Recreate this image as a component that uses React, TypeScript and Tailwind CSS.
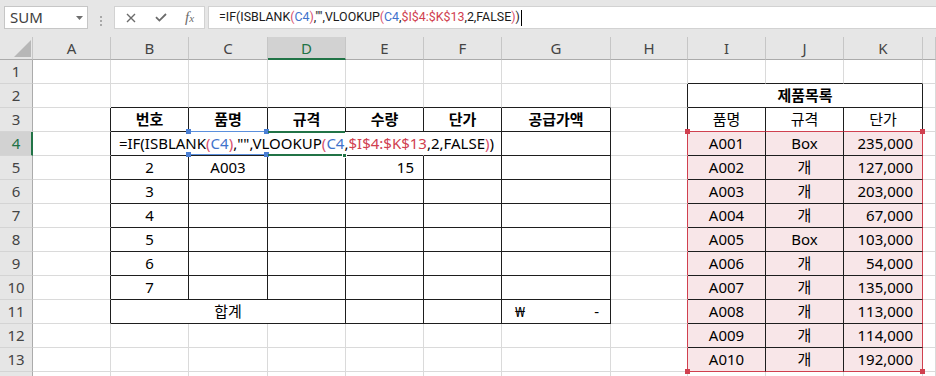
import type { ReactNode } from 'react'

type Line = 'grid' | 'dark' | 'red' | 'none'
type Align = 'center' | 'right' | 'split'

const RIGHT: Record<Line, string> = {
  grid: 'border-r-[#dadada]',
  dark: 'border-r-[#1e1e1e]',
  red: 'border-r-[#d0404f]',
  none: 'border-r-transparent',
}

const BOTTOM: Record<Line, string> = {
  grid: 'border-b-[#dadada]',
  dark: 'border-b-[#1e1e1e]',
  red: 'border-b-[#d0404f]',
  none: 'border-b-transparent',
}

const COLS = ['A', 'B', 'C', 'D', 'E', 'F', 'G', 'H', 'I', 'J', 'K', '']
const ROWS = [1, 2, 3, 4, 5, 6, 7, 8, 9, 10, 11, 12, 13, 14]
const HEAD = ['번호', '품명', '규격', '수량', '단가', '공급가액']

const PRODUCTS = [
  ['A001', 'Box', '235,000'],
  ['A002', '개', '127,000'],
  ['A003', '개', '203,000'],
  ['A004', '개', '67,000'],
  ['A005', 'Box', '103,000'],
  ['A006', '개', '54,000'],
  ['A007', '개', '135,000'],
  ['A008', '개', '113,000'],
  ['A009', '개', '114,000'],
  ['A010', '개', '192,000'],
]

const BLUE = 'text-[#3f73cc]'
const PINK = 'text-[#d8506e]'
const RED = 'text-[#d0404f]'

// formula tokens, coloured the way excel colours references and inner parens
const FORMULA: [string, string][] = [
  ['=IF(ISBLANK', ''],
  ['(', PINK],
  ['C4', BLUE],
  [')', PINK],
  [',"",VLOOKUP', ''],
  ['(', PINK],
  ['C4', BLUE],
  [',', ''],
  ['$I$4:$K$13', RED],
  [',2,FALSE', ''],
  [')', PINK],
  [')', ''],
]

function Formula() {
  return (
    <>
      {FORMULA.map(([t, cls], i) => (
        <span key={i} className={cls}>
          {t}
        </span>
      ))}
    </>
  )
}

// line on the right side of column c (A = 0) in row r
function vline(r: number, c: number): Line {
  if (r >= 3 && r <= 11 && c <= 6) {
    if (r === 4 && c >= 1 && c <= 4) return 'none'
    if (r === 11 && (c === 1 || c === 2)) return 'none'
    return 'dark'
  }
  if (r === 2 && c >= 7 && c <= 10) return c === 8 || c === 9 ? 'none' : 'dark'
  if (r === 3 && c >= 7 && c <= 10) return 'dark'
  if (r >= 4 && r <= 13 && c >= 7 && c <= 10) return c === 7 || c === 10 ? 'red' : 'dark'
  return 'grid'
}

// line under row r in column c
function hline(r: number, c: number): Line {
  if (r >= 2 && r <= 11 && c >= 1 && c <= 6) return 'dark'
  if (c >= 8 && c <= 10) {
    if (r === 3 || r === 13) return 'red'
    if (r >= 1 && r <= 12) return 'dark'
  }
  return 'grid'
}

function content(r: number, c: number): { text?: ReactNode; align?: Align; bold?: boolean } {
  if (r === 2 && c === 8) return { text: '제품목록', bold: true }
  if (r === 3 && c >= 1 && c <= 6) return { text: HEAD[c - 1], bold: true }
  if (r === 3 && c >= 8 && c <= 10) return { text: ['품명', '규격', '단가'][c - 8] }
  if (r >= 4 && r <= 13 && c >= 8 && c <= 10) {
    return { text: PRODUCTS[r - 4][c - 8], align: c === 10 ? 'right' : 'center' }
  }
  if (r >= 5 && r <= 10 && c === 1) return { text: String(r - 3) }
  if (r === 5 && c === 2) return { text: 'A003' }
  if (r === 5 && c === 4) return { text: '15', align: 'right' }
  if (r === 11 && c === 1) return { text: '합계' }
  if (r === 11 && c === 6) {
    return {
      text: (
        <>
          <span>₩</span>
          <span>-</span>
        </>
      ),
      align: 'split',
    }
  }
  return {}
}

function Handle({ className }: { className: string }) {
  return <div className={`absolute z-20 h-[5px] w-[5px] ${className}`} />
}

function overlay(r: number, c: number): ReactNode {
  // C4 reference box (blue)
  if (r === 4 && c === 2) {
    return (
      <>
        <div className="absolute left-[-1px] right-0 top-[-1px] z-20 h-[1px] bg-[#5b8fdc]" />
        <div className="absolute bottom-0 left-[-1px] right-0 z-20 h-[1px] bg-[#5b8fdc]" />
        <Handle className="left-[-3px] top-[-3px] bg-[#4a7fd4]" />
        <Handle className="right-[-2px] top-[-3px] bg-[#4a7fd4]" />
        <Handle className="bottom-[-2px] left-[-3px] bg-[#4a7fd4]" />
        <Handle className="bottom-[-2px] right-[-2px] bg-[#4a7fd4]" />
      </>
    )
  }
  // active cell D4 (green)
  if (r === 4 && c === 3) {
    return (
      <>
        <div className="absolute left-0 right-0 top-[-1px] z-20 h-[2px] bg-[#217346]" />
        <div className="absolute bottom-[-1px] left-0 right-0 z-20 h-[2px] bg-[#217346]" />
        <div className="absolute bottom-[-3px] right-[-2px] z-20 h-[5px] w-[5px] border border-white bg-[#217346]" />
      </>
    )
  }
  // $I$4:$K$13 reference box corners (red)
  if (r === 4 && c === 8) return <Handle className="left-[-3px] top-[-3px] bg-[#d0404f]" />
  if (r === 4 && c === 10) return <Handle className="right-[-3px] top-[-3px] bg-[#d0404f]" />
  if (r === 13 && c === 8) return <Handle className="bottom-[-3px] left-[-3px] bg-[#d0404f]" />
  if (r === 13 && c === 10) return <Handle className="bottom-[-3px] right-[-3px] bg-[#d0404f]" />
  return null
}

function FormulaBar() {
  return (
    <div className="flex h-[37px] shrink-0 bg-[#e6e6e6] pt-[6px]">
      <div className="ml-[4px] flex h-[23px] w-[84px] items-center justify-between border border-[#c6c6c6] bg-white pl-[5px] pr-[4px] text-[15px] text-[#404040]">
        <span>SUM</span>
        <svg width="7" height="4" viewBox="0 0 7 4">
          <path d="M0 0H7L3.5 4Z" fill="#6e6e6e" />
        </svg>
      </div>
      <div className="flex w-[26px] flex-col items-center justify-center gap-[2px] pb-[1px]">
        <div className="h-[2px] w-[2px] bg-[#a8a8a8]" />
        <div className="h-[2px] w-[2px] bg-[#a8a8a8]" />
        <div className="h-[2px] w-[2px] bg-[#a8a8a8]" />
      </div>
      <div className="flex h-[23px] w-[91px] items-center border border-[#d2d2d2] bg-white text-[#6b6b6b]">
        <div className="flex w-[32px] justify-center">
          <svg width="10" height="10" viewBox="0 0 10 10">
            <path d="M1 1L9 9M9 1L1 9" stroke="#6b6b6b" strokeWidth="1.4" />
          </svg>
        </div>
        <div className="flex w-[28px] justify-center">
          <svg width="12" height="9" viewBox="0 0 12 9">
            <path d="M1 4.2L4.4 7.6L11 1" fill="none" stroke="#6b6b6b" strokeWidth="1.8" />
          </svg>
        </div>
        <div className="flex w-[29px] items-baseline justify-center font-['Liberation_Serif',serif] italic">
          <span className="text-[15px]">f</span>
          <span className="text-[11px]">x</span>
        </div>
      </div>
      <div className="ml-[3px] flex h-[23px] flex-1 items-center border-y border-l border-[#d2d2d2] bg-white pl-[10px] font-['Roboto',sans-serif] text-[12.4px] text-[#1a1a1a]">
        <Formula />
        <div className="ml-[1px] h-[16px] w-[1px] bg-black" />
      </div>
    </div>
  )
}

function Sheet() {
  const cells: ReactNode[] = []

  COLS.forEach((col, i) => {
    if (i === 0) {
      cells.push(
        <div
          key="corner"
          className="flex h-[23px] items-end justify-end border-b border-r border-b-[#ababab] border-r-[#c6c6c6] bg-[#e6e6e6] pb-[2px] pr-[1px]"
        >
          <svg width="17" height="17" viewBox="0 0 17 17">
            <path d="M17 0V17H0Z" fill="#b7b7b7" />
          </svg>
        </div>,
      )
    }
    const active = col === 'D'
    cells.push(
      <div
        key={`h-${col || 'L'}`}
        className={
          active
            ? 'flex h-[23px] items-center justify-center border-b-2 border-r border-b-[#217346] border-r-[#c6c6c6] bg-[#d2d2d2] pt-[1px] text-[#217346]'
            : 'flex h-[23px] items-center justify-center border-b border-r border-b-[#ababab] border-r-[#c6c6c6] bg-[#e6e6e6] text-[#444444]'
        }
      >
        {col}
      </div>,
    )
  })

  ROWS.forEach((r) => {
    cells.push(
      <div
        key={`r-${r}`}
        className={
          r === 4
            ? 'flex h-[24px] items-center justify-center border-b border-r-2 border-b-[#d4d4d4] border-r-[#217346] bg-[#d2d2d2] pl-[1px] text-[#217346]'
            : 'flex h-[24px] items-center justify-center border-b border-r border-b-[#d4d4d4] border-r-[#ababab] bg-[#e6e6e6] text-[#444444]'
        }
      >
        {r < 14 ? r : null}
      </div>,
    )

    for (let c = 0; c < COLS.length; c++) {
      const merged = (r === 2 && c === 8) || (r === 11 && c === 1)
      if ((r === 2 && (c === 9 || c === 10)) || (r === 11 && (c === 2 || c === 3))) continue
      const right = vline(r, merged ? c + 2 : c)
      const bottom = hline(r, c)
      const { text, align = 'center', bold } = content(r, c)
      const pink = r >= 4 && r <= 13 && c >= 8 && c <= 10
      const justify =
        align === 'right' ? 'justify-end pr-[9px]' : align === 'split' ? 'justify-between pl-[13px] pr-[11px]' : 'justify-center'

      cells.push(
        <div
          key={`${r}-${c}`}
          className={`relative flex h-[24px] items-center border-b border-r ${RIGHT[right]} ${BOTTOM[bottom]} ${justify} ${
            merged ? 'col-span-3' : ''
          } ${pink ? 'bg-[#f8e6e8]' : ''} ${bold ? 'font-bold' : ''}`}
        >
          {r === 4 && c === 3 ? (
            <span className="relative z-10 whitespace-nowrap">
              <Formula />
            </span>
          ) : (
            text
          )}
          {overlay(r, c)}
        </div>,
      )
    }
  })

  return (
    <div className="grid grid-cols-[33px_78px_78px_79px_78px_78px_78px_109px_77px_78px_78px_79px_1fr]">{cells}</div>
  )
}

export default function App() {
  return (
    <div className="flex h-[376px] w-[936px] flex-col overflow-hidden bg-white font-['Noto_Sans','Noto_Sans_CJK_KR',sans-serif] text-[15px] text-black">
      <FormulaBar />
      <Sheet />
    </div>
  )
}
